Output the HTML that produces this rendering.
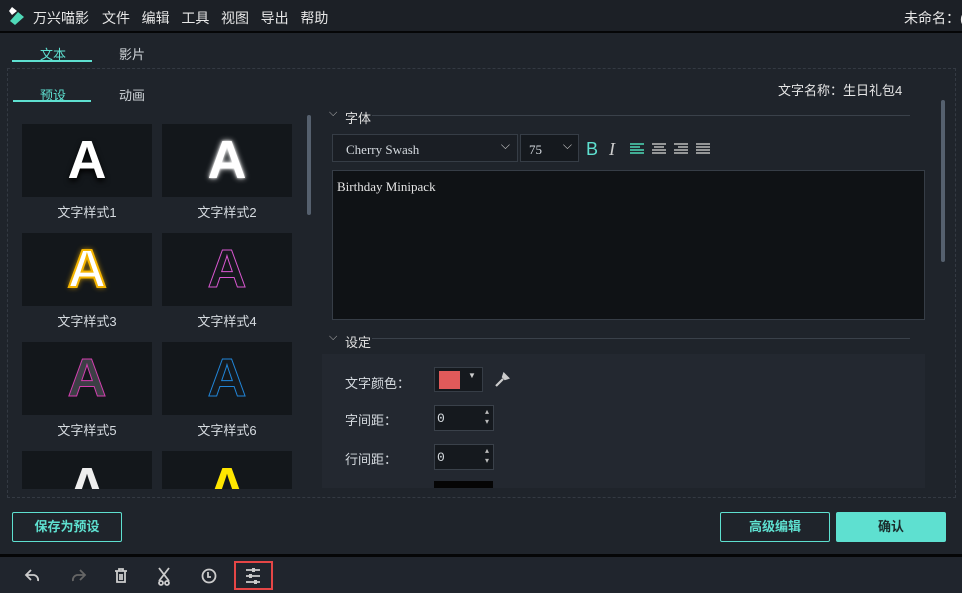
<!DOCTYPE html>
<html><head><meta charset="utf-8"><style>
*{margin:0;padding:0;box-sizing:border-box}
body{width:962px;height:593px;background:#1f242b;font-family:"Liberation Sans","Noto Sans CJK SC",sans-serif;color:#d6dbe0;font-size:13px;position:relative;overflow:hidden}
.a{position:absolute}
.t{white-space:nowrap}
.th{position:absolute;width:130px;height:73px;background:#13171b;overflow:hidden;text-align:center;font-weight:bold;font-size:54px;line-height:73px;font-family:"Liberation Sans",sans-serif}
.lb{position:absolute;width:130px;text-align:center;font-size:13px;color:#d6dbe0}
.sp{position:absolute;width:60px;height:26px;background:#15191e;border:1px solid #3a414a;font-size:13px;padding:5px 2px;font-family:"Liberation Mono",monospace}
.sp:after{content:"▴\A▾";white-space:pre;position:absolute;right:4px;top:2px;font-size:8px;line-height:10px;color:#bbb}
.btn{position:absolute;height:30px;border:1px solid #5ee0d0;border-radius:2px;text-align:center;line-height:28px;font-weight:bold;color:#5ee0d0;font-size:13px}
</style></head><body>
<div class="a" style="left:0;top:0;width:962px;height:32px;background:#1c2026"></div>
<div class="a" style="left:0;top:31px;width:962px;height:2px;background:#050607"></div>
<svg class="a" style="left:8px;top:6px" width="18" height="20" viewBox="0 0 18 20"><path d="M4 1l5 4-5 4-3-4z" fill="#fff"/><path d="M10 6l6 5-9 8-5-4z" fill="#4fd9b8"/></svg>
<div class="a t" style="left:33px;top:8px;font-size:14px;color:#e6e6e6">万兴喵影</div>
<div class="a t" style="left:102px;top:8px;font-size:14px;color:#e6e6e6;word-spacing:0">文件&nbsp;&nbsp;&nbsp;编辑&nbsp;&nbsp;&nbsp;工具&nbsp;&nbsp;&nbsp;视图&nbsp;&nbsp;&nbsp;导出&nbsp;&nbsp;&nbsp;帮助</div>
<div class="a t" style="left:904px;top:8px;font-size:14px;color:#e6e6e6">未命名：(</div>
<div class="a t" style="left:40px;top:44px;color:#5ee0d0">文本</div>
<div class="a" style="left:12px;top:60px;width:80px;height:2px;background:#5ee0d0"></div>
<div class="a t" style="left:119px;top:44px;color:#cfd4d9">影片</div>
<div class="a" style="left:7px;top:68px;width:949px;height:430px;border:1px dashed #343a43"></div>
<div class="a t" style="left:40px;top:85px;color:#5ee0d0">预设</div>
<div class="a" style="left:13px;top:100px;width:78px;height:2px;background:#5ee0d0"></div>
<div class="a t" style="left:119px;top:85px;color:#cfd4d9">动画</div>
<div class="a" style="left:22px;top:114px;width:280px;height:375px;overflow:hidden">
<div class="th" style="left:0;top:10px;color:#fff;text-shadow:0 3px 6px #000">A</div>
<div class="th" style="left:140px;top:10px;color:#fff;text-shadow:0 0 6px #fff,0 0 2px #ccc">A</div>
<div class="lb" style="left:0;top:88px">文字样式1</div><div class="lb" style="left:140px;top:88px">文字样式2</div>
<div class="th" style="left:0;top:119px;color:#fff;-webkit-text-stroke:2px #f5b400;text-shadow:0 0 6px #f5b400">A</div>
<div class="th" style="left:140px;top:119px;color:#15191d;-webkit-text-stroke:1px #d957d0">A</div>
<div class="lb" style="left:0;top:197px">文字样式3</div><div class="lb" style="left:140px;top:197px">文字样式4</div>
<div class="th" style="left:0;top:228px;color:#3c3f45;-webkit-text-stroke:1px #d43fb0">A</div>
<div class="th" style="left:140px;top:228px;color:#15191d;-webkit-text-stroke:1px #2185d8">A</div>
<div class="lb" style="left:0;top:306px">文字样式5</div><div class="lb" style="left:140px;top:306px">文字样式6</div>
<div class="th" style="left:0;top:337px;color:#eee">A</div>
<div class="th" style="left:140px;top:337px;color:#ffe600">A</div>
</div>
<div class="a" style="left:307px;top:115px;width:4px;height:100px;background:#55606e;border-radius:2px"></div>
<div class="a t" style="left:778px;top:80px;color:#e6e6e6">文字名称：生日礼包4</div>
<div class="a" style="left:941px;top:100px;width:4px;height:162px;background:#55606e;border-radius:2px"></div>
<div class="a t" style="left:329px;top:107px;font-size:11px;color:#bbb">⌵</div>
<div class="a t" style="left:345px;top:108px;color:#e0e0e0">字体</div>
<div class="a" style="left:372px;top:115px;width:538px;height:1px;background:#3a414a"></div>
<div class="a" style="left:332px;top:134px;width:186px;height:28px;background:#1a1e24;border:1px solid #363d46;font-family:'Liberation Serif',serif;padding:7px 13px;font-size:13px">Cherry Swash<span style="position:absolute;right:7px;top:3px;font-size:12px;color:#ccc">⌵</span></div>
<div class="a" style="left:520px;top:134px;width:59px;height:28px;background:#15191e;border:1px solid #363d46;font-family:'Liberation Serif',serif;padding:7px 8px;font-size:13px">75<span style="position:absolute;right:6px;top:3px;font-size:12px;color:#ccc">⌵</span></div>
<div class="a t" style="left:586px;top:139px;font-size:18px;color:#5ee0d0;font-family:'Liberation Sans'">B</div>
<div class="a t" style="left:609px;top:139px;font-size:18px;color:#ccc;font-family:'Liberation Serif';font-style:italic">I</div>
<svg class="a" style="left:629px;top:143px" width="82" height="11"><g stroke-width="1.4"><path d="M1 1h14M1 4h10M1 7h14M1 10h14" stroke="#4fd9b8"/><path d="M23 1h14M25 4h10M23 7h14M23 10h14M45 1h14M49 4h10M45 7h14M45 10h14M67 1h14M67 4h14M67 7h14M67 10h14" stroke="#bbb"/></g></svg>
<div class="a" style="left:332px;top:170px;width:593px;height:150px;background:#0f1215;border:1px solid #363d46;font-family:'Liberation Serif',serif;padding:8px 4px;font-size:13px;color:#e6e6e6">Birthday Minipack</div>
<div class="a t" style="left:329px;top:331px;font-size:11px;color:#bbb">⌵</div>
<div class="a t" style="left:345px;top:332px;color:#e0e0e0">设定</div>
<div class="a" style="left:372px;top:338px;width:538px;height:1px;background:#3a414a"></div>
<div class="a" style="left:322px;top:354px;width:603px;height:134px;background:#232830"></div>
<div class="a t" style="left:345px;top:373px">文字颜色：</div>
<div class="a" style="left:434px;top:367px;width:49px;height:25px;background:#15191e;border:1px solid #363d46"><div style="position:absolute;left:4px;top:3px;width:21px;height:18px;background:#e05a5a"></div><span style="position:absolute;left:33px;top:3px;font-size:8px;color:#ccc">▼</span></div>
<svg class="a" style="left:494px;top:372px" width="16" height="16" viewBox="0 0 16 16"><path d="M2 14l7-7M10 2l4 4-3 1-2-2z" stroke="#ccc" stroke-width="2.2" fill="#ccc"/></svg>
<div class="a t" style="left:345px;top:410px">字间距：</div>
<div class="sp" style="left:434px;top:405px">0</div>
<div class="a t" style="left:345px;top:449px">行间距：</div>
<div class="sp" style="left:434px;top:444px">0</div>
<div class="a" style="left:434px;top:481px;width:59px;height:7px;background:#050505"></div>
<div class="btn" style="left:12px;top:512px;width:110px">保存为预设</div>
<div class="btn" style="left:720px;top:512px;width:110px">高级编辑</div>
<div class="btn" style="left:836px;top:512px;width:110px;background:#5ee0d0;color:#1a2a2a">确认</div>
<div class="a" style="left:0;top:554px;width:962px;height:3px;background:#050607"></div>
<div class="a" style="left:0;top:557px;width:962px;height:36px;background:#20252d"></div>
<svg class="a" style="left:0;top:557px" width="300" height="36">
<g fill="none" stroke="#ccc" stroke-width="1.8">
<path d="M31 13l-5 5 5 5M26 18h8a5 5 0 0 1 4 6"/>
<path d="M80 13l5 5-5 5M85 18h-8a5 5 0 0 0-4 6" stroke="#666"/>
<path d="M115 14h12M119 14v-2h4v2M117 14v11h8v-11M120 17v6M122 17v6"/>
<path d="M159 11l10 13M169 11l-10 13"/><circle cx="161" cy="26" r="2"/><circle cx="167" cy="26" r="2"/>
<circle cx="209" cy="19" r="6.5"/><path d="M208 15v5h3"/>
<path d="M246 13h14M246 19h14M246 25h14"/>
</g>
<g fill="#ccc"><rect x="252" y="11" width="3" height="4"/><rect x="249" y="17" width="3" height="4"/><rect x="254" y="23" width="3" height="4"/></g>
<rect x="235" y="5" width="37" height="27" fill="none" stroke="#e54646" stroke-width="2"/>
</svg>
</body></html>
